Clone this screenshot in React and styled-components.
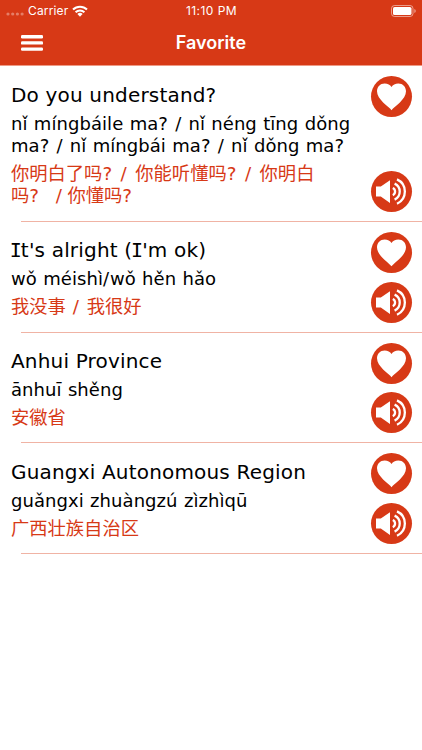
import React from "react";
import styled, { createGlobalStyle } from "styled-components";

const RED = "#d73916";

const GlobalStyle = createGlobalStyle`
  * { box-sizing: border-box; }
  body { margin: 0; background: #fff; }
`;

const Screen = styled.main`
  width: 422px;
  height: 750px;
  overflow: hidden;
  background: #fff;
  font-family: "DejaVu Sans", "Noto Sans CJK SC", sans-serif;
`;

const Header = styled.header`
  height: 66px;
  background: ${RED};
  color: #fff;
  border-bottom: 1px solid #ee9a85;
  font-family: Inter, "Liberation Sans", sans-serif;
`;

const StatusBar = styled.div`
  height: 21px;
  display: grid;
  grid-template-columns: 1fr auto 1fr;
  align-items: center;
  padding: 0 5px 0 6px;
  font-size: 12px;
  line-height: 21px;
`;

const Carrier = styled.div`
  display: flex;
  align-items: center;
  letter-spacing: 0.15px;
`;

const Signal = styled.svg`
  width: 18px;
  height: 4px;
  margin: 7px 4px 0 0;
`;

const Wifi = styled.svg`
  width: 16px;
  height: 12px;
  margin-left: 4px;
`;

const Clock = styled.time`
  letter-spacing: 0.45px;
`;

const Battery = styled.svg`
  width: 26px;
  height: 12px;
  justify-self: end;
`;

const NavBar = styled.div`
  height: 44px;
  display: grid;
  grid-template-columns: 1fr auto 1fr;
  align-items: center;
  padding: 0 20px;
`;

const MenuButton = styled.button`
  width: 24px;
  height: 18px;
  padding: 0;
  border: 0;
  background: none;
  svg { display: block; }
`;

const PageTitle = styled.h1`
  margin: 0;
  font-size: 18px;
  font-weight: 600;
  line-height: 24px;
`;

const Row = styled.article`
  display: flex;
  justify-content: space-between;
  height: ${(p) => p.$height}px;
  padding: 0 10px 0 11px;
  background: linear-gradient(#f0b3a4, #f0b3a4) 21px 100% / 100% 1px no-repeat;
`;

const Texts = styled.div`
  padding-top: ${(p) => p.$top}px;
  white-space: pre;
`;

const English = styled.h2`
  margin: 0;
  font-size: 20px;
  font-weight: 400;
  line-height: 26px;
  color: #000;
  letter-spacing: 0.18px;
`;

const SerifI = styled.span`
  font-family: "DejaVu Sans Mono", monospace;
  margin: 0 -1.2px;
`;

const Pinyin = styled.p`
  margin: 5px 0 0;
  font-size: 18px;
  line-height: 22px;
  color: #000;
  letter-spacing: 0.06px;
  word-spacing: 0.55px;
`;

const Mark = styled.span`
  letter-spacing: 0.9px;
`;

const Hanzi = styled.p`
  margin: 4px 0 0;
  font-family: "Noto Sans CJK SC", sans-serif;
  font-size: 18.3px;
  font-weight: 400;
  line-height: 22px;
  color: ${RED};
`;

const Separator = styled.span`
  font-family: "DejaVu Sans", sans-serif;
  line-height: 1;
  letter-spacing: ${(p) => p.$spacing}px;
`;

const Actions = styled.div`
  display: flex;
  flex-direction: column;
  justify-content: space-between;
  padding: 10px 0 10px;
`;

const RoundButton = styled.button`
  width: 41px;
  height: 41px;
  padding: 0;
  border: 0;
  border-radius: 50%;
  background: ${RED};
  svg { display: block; }
`;

const HeartIcon = () => (
  <svg width="41" height="41" viewBox="0 0 41 41">
    <path fill="#fff" d="M20.5 34.2C17.5 30.5 6 23.5 6 15.3C6 10.8 9.3 7.5 13.6 7.5C16.7 7.5 19.2 8.8 20.5 11C21.8 8.8 24.3 7.5 27.4 7.5C31.7 7.5 35 10.8 35 15.3C35 23.5 23.5 30.5 20.5 34.2Z" />
  </svg>
);

const SpeakerIcon = () => (
  <svg width="41" height="41" viewBox="0 0 41 41">
    <path fill="#fff" d="M5 15.6H9.8L19 9.3V32L9.8 25.6H5Z" />
    <g fill="none" stroke="#fff" strokeWidth="2.3">
      <path d="M21.8 17A4 4 0 0 1 21.8 24.2" />
      <path d="M23.6 12.6A8.8 8.8 0 0 1 23.6 28.6" />
      <path d="M26 8.4A13.4 13.4 0 0 1 26 32.8" />
    </g>
  </svg>
);

const phrases = [
  {
    height: 156,
    top: 16,
    english: "Do you understand?",
    pinyin: "nǐ míngbáile ma? / nǐ néng tīng dǒng\nma? / nǐ míngbái ma? / nǐ dǒng ma?",
    hanzi: "你明白了吗? / 你能听懂吗? / 你明白\n吗?   / 你懂吗?",
  },
  { height: 111, top: 15, english: "It's alright (I'm ok)", pinyin: "wǒ méishì/wǒ hěn hǎo", hanzi: "我没事 / 我很好" },
  { height: 110, top: 15, english: "Anhui Province", pinyin: "ānhuī shěng", hanzi: "安徽省" },
  { height: 111, top: 16, english: "Guangxi Autonomous Region", pinyin: "guǎngxi zhuàngzú zìzhìqū", hanzi: "广西壮族自治区" },
];

const separatorSpacing = { "? / ": 1.35, " / ": 1 };

const withSerifI = (text) =>
  text.split(/(I)/).map((part, i) => (part === "I" ? <SerifI key={i}>I</SerifI> : part));

const withMarks = (text) =>
  text.split(/([/?])/).map((part, i) => (/^[/?]$/.test(part) ? <Mark key={i}>{part}</Mark> : part));

const withSeparators = (text) =>
  text.split(/([ /?]+)/).map((part, i) =>
    /^[ /?]+$/.test(part) ? (
      <Separator key={i} $spacing={separatorSpacing[part] ?? -0.15}>{part}</Separator>
    ) : (
      part
    )
  );

export default function App() {
  return (
    <>
      <GlobalStyle />
      <Screen>
        <Header>
          <StatusBar>
            <Carrier>
              <Signal viewBox="0 0 18 4" fill="#fff" opacity="0.35">
                <circle cx="2" cy="2" r="1.6" />
                <circle cx="6.7" cy="2" r="1.6" />
                <circle cx="11.4" cy="2" r="1.6" />
                <circle cx="16.1" cy="2" r="1.6" />
              </Signal>
              Carrier
              <Wifi viewBox="0 0 16 12">
                <g fill="none" stroke="#fff" strokeWidth="2">
                  <path d="M1 4.5A10 10 0 0 1 15 4.5" />
                  <path d="M3.6 7.3A6.3 6.3 0 0 1 12.4 7.3" />
                </g>
                <path fill="#fff" d="M5.4 9A3.8 3.8 0 0 1 10.6 9L8 11.7Z" />
              </Wifi>
            </Carrier>
            <Clock>11:10 PM</Clock>
            <Battery viewBox="0 0 26 12">
              <rect x="0.5" y="0.5" width="21.5" height="11" rx="3" fill="none" stroke="#fff" strokeOpacity="0.5" />
              <rect x="2" y="2" width="18.5" height="8" rx="1.6" fill="#fff" />
              <path d="M23.3 4V8Q24.8 7.4 24.8 6T23.3 4Z" fill="#fff" fillOpacity="0.5" />
            </Battery>
          </StatusBar>
          <NavBar>
            <MenuButton aria-label="Menu">
              <svg width="24" height="18" viewBox="0 0 24 18" fill="#fff">
                <rect x="1" y="1" width="22" height="3.4" rx="1.2" />
                <rect x="1" y="7.2" width="22" height="3.4" rx="1.2" />
                <rect x="1" y="13.4" width="22" height="3.4" rx="1.2" />
              </svg>
            </MenuButton>
            <PageTitle>Favorite</PageTitle>
          </NavBar>
        </Header>
        {phrases.map((p) => (
          <Row key={p.english} $height={p.height}>
            <Texts $top={p.top}>
              <English>{withSerifI(p.english)}</English>
              <Pinyin>{withMarks(p.pinyin)}</Pinyin>
              <Hanzi>{withSeparators(p.hanzi)}</Hanzi>
            </Texts>
            <Actions>
              <RoundButton aria-label="Favorite"><HeartIcon /></RoundButton>
              <RoundButton aria-label="Play"><SpeakerIcon /></RoundButton>
            </Actions>
          </Row>
        ))}
      </Screen>
    </>
  );
}
